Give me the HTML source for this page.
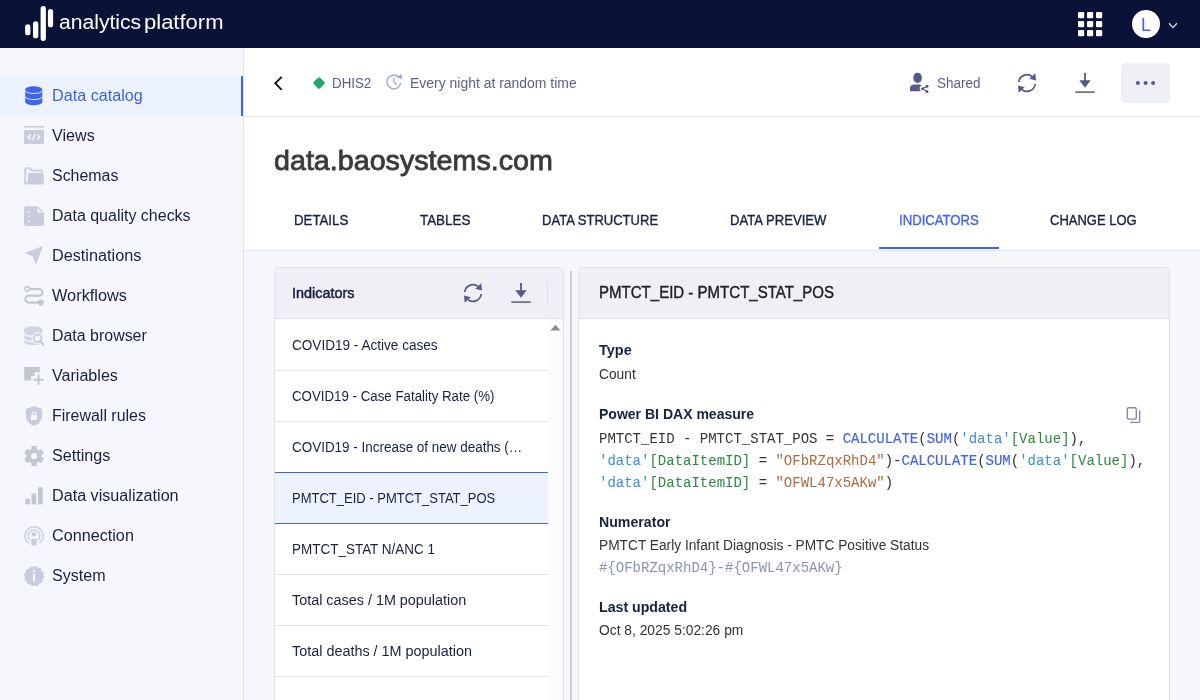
<!DOCTYPE html>
<html lang="en">
<head>
<meta charset="utf-8">
<title>analytics platform</title>
<style>
*{box-sizing:border-box;margin:0;padding:0}
html,body{width:1200px;height:700px;overflow:hidden}
body{font-family:"Liberation Sans",sans-serif;color:#1a2040;background:#fff;position:relative;font-size:14px}
#app{position:absolute;left:0;top:0;width:1200px;height:700px;will-change:transform}
.abs{position:absolute}
svg{position:absolute;overflow:visible}
#topbar{left:0;top:0;width:1200px;height:48px;background:#0a1237}
#logotxt{left:59px;top:0;line-height:44px;font-size:19.5px;color:#fff;white-space:nowrap}
#avatar{left:1132px;top:10px;width:28px;height:28px;border-radius:50%;background:#fff;color:#4263eb;text-align:center;line-height:31px;font-size:18px}
#sidebar{left:0;top:48px;width:244px;height:652px;background:#f6f7fc;border-right:1px solid #dfe2ee}
.nav{position:absolute;left:0;width:243px;height:40px}
.nav span{position:absolute;left:52px;top:0;line-height:40px;font-size:16px;color:#1a2040;white-space:nowrap}
.nav.active{background:#edf3fe;border-right:2px solid #4263eb}
.nav.active span{color:#3f5fe0}
#main{left:244px;top:48px;width:956px;height:652px;background:#fff}
#hdr{left:244px;top:48px;width:956px;height:69px;border-bottom:1px solid #e6e8f0;background:#fff}
.mut{position:absolute;font-size:14px;color:#5a5f8a;white-space:nowrap;line-height:20px}
#title{left:274px;top:141px;line-height:40px;font-size:28px;color:#3a3a3a;white-space:nowrap;-webkit-text-stroke:0.8px #3a3a3a}
#content{left:244px;top:250px;width:956px;height:450px;background:#f6f7fb;border-top:1px solid #e2e5ee}
.tab{position:absolute;top:190px;height:60px;line-height:60px;font-size:14px;color:#1a2040;white-space:nowrap;-webkit-text-stroke:0.35px #1a2040}
.tab.on{color:#4263eb;-webkit-text-stroke:0.35px #4263eb}
.panel{position:absolute;top:267px;height:440px;background:#fff;border:1px solid #dfe2ec;border-radius:4px 4px 0 0}
.phdr{position:absolute;left:0;top:0;right:0;height:51px;background:#eef0f6;border-bottom:1px solid #dfe2ec;border-radius:3px 3px 0 0}
.li{position:absolute;left:275px;width:273px;height:51px;border-bottom:1px solid #e0e3ec;background:#fff}
.li span{position:absolute;left:17px;top:0;line-height:51px;font-size:14px;color:#1a2040;white-space:nowrap}
.li.sel{background:#edf3fe;border-bottom:1px solid #4263eb}
.lbl{position:absolute;left:599px;font-size:14px;line-height:20px;color:#1a2040;white-space:nowrap;font-weight:bold}
.val{position:absolute;left:599px;font-size:14px;line-height:20px;color:#333;white-space:nowrap}
.mono{position:absolute;left:599px;font-family:"Liberation Mono",monospace;font-size:14px;line-height:22px;white-space:nowrap;color:#333}
.k{color:#4263eb;-webkit-text-stroke:0.18px #4263eb}.s{color:#3b8fd0}.g{color:#2a8a3c}.o{color:#b06a3c}
/*FIT*/
#lg1{transform:scaleX(1.0826);transform-origin:0 50%;margin-left:-0.44px}
#lg2{transform:scaleX(1.1287);transform-origin:0 50%;margin-left:3.83px}
#n1{transform:scaleX(1.0114);transform-origin:0 50%;margin-left:0.00px}
#n2{transform:scaleX(1.0093);transform-origin:0 50%;margin-left:0.00px}
#n3{transform:scaleX(0.9964);transform-origin:0 50%;margin-left:0.00px}
#n4{transform:scaleX(0.9991);transform-origin:0 50%;margin-left:0.00px}
#n5{transform:scaleX(1.0143);transform-origin:0 50%;margin-left:0.00px}
#n6{transform:scaleX(1.0209);transform-origin:0 50%;margin-left:0.00px}
#n7{transform:scaleX(0.9961);transform-origin:0 50%;margin-left:0.00px}
#n8{transform:scaleX(1.0055);transform-origin:0 50%;margin-left:0.00px}
#n9{transform:scaleX(0.9965);transform-origin:0 50%;margin-left:0.00px}
#n10{transform:scaleX(1.0097);transform-origin:0 50%;margin-left:0.00px}
#n11{transform:scaleX(1.0096);transform-origin:0 50%;margin-left:0.00px}
#n12{transform:scaleX(1.0115);transform-origin:0 50%;margin-left:0.00px}
#n13{transform:scaleX(1.0039);transform-origin:0 50%;margin-left:0.00px}
#m1{transform:scaleX(0.9524);transform-origin:0 50%;margin-left:0.00px}
#m2{transform:scaleX(0.9961);transform-origin:0 50%;margin-left:0.00px}
#m3{transform:scaleX(0.9609);transform-origin:0 50%;margin-left:0.00px}
#title{transform:scaleX(1.0239);transform-origin:0 50%;margin-left:0.25px}
#t1{transform:scaleX(0.9467);transform-origin:0 50%;margin-left:0.00px}
#t2{transform:scaleX(0.9568);transform-origin:0 50%;margin-left:0.00px}
#t3{transform:scaleX(0.9310);transform-origin:0 50%;margin-left:0.00px}
#t4{transform:scaleX(0.9364);transform-origin:0 50%;margin-left:0.00px}
#t5{transform:scaleX(0.9386);transform-origin:0 50%;margin-left:0.00px}
#t6{transform:scaleX(0.9279);transform-origin:0 50%;margin-left:0.00px}
#b1{transform:scaleX(1.0289);transform-origin:0 50%;margin-left:0.00px}
#l1{transform:scaleX(0.9695);transform-origin:0 50%;margin-left:0.00px}
#l2{transform:scaleX(0.9497);transform-origin:0 50%;margin-left:0.00px}
#l3{transform:scaleX(0.9608);transform-origin:0 50%;margin-left:0.00px}
#l4{transform:scaleX(0.9286);transform-origin:0 50%;margin-left:0.00px}
#l5{transform:scaleX(0.9627);transform-origin:0 50%;margin-left:0.00px}
#l6{transform:scaleX(1.0269);transform-origin:0 50%;margin-left:0.00px}
#l7{transform:scaleX(1.0280);transform-origin:0 50%;margin-left:0.00px}
#ptitle{transform:scaleX(0.9395);transform-origin:0 50%;margin-left:0.00px}
#b2{transform:scaleX(1.0338);transform-origin:0 50%;margin-left:0.00px}
#v1{transform:scaleX(0.9843);transform-origin:0 50%;margin-left:0.00px}
#b3{transform:scaleX(1.0015);transform-origin:0 50%;margin-left:0.00px}
#b4{transform:scaleX(1.0104);transform-origin:0 50%;margin-left:0.00px}
#v2{transform:scaleX(0.9803);transform-origin:0 50%;margin-left:0.00px}
#b5{transform:scaleX(1.0114);transform-origin:0 50%;margin-left:0.00px}
#v3{transform:scaleX(0.9863);transform-origin:0 50%;margin-left:0.00px}
/*ENDFIT*/
</style>
</head>
<body>
<div id="app">
<!-- TOPBAR -->
<div id="topbar" class="abs">
  <svg style="left:0;top:0" width="60" height="48" viewBox="0 0 60 48">
    <rect x="25.100" y="24.300" width="5.300" height="11" rx="2.650" fill="#fff"/>
    <rect x="33" y="21.300" width="5.300" height="17" rx="2.650" fill="#fff"/>
    <rect x="40.600" y="6" width="5.300" height="35" rx="2.650" fill="#fff"/>
    <rect x="47.900" y="9" width="5.200" height="18.300" rx="2.600" fill="#fff"/>
  </svg>
  <div id="logotxt" class="abs"><span id="lg1" style="display:inline-block">analytics</span> <span id="lg2" style="display:inline-block">platform</span></div>
  <svg style="left:1078px;top:12px" width="24" height="24" viewBox="0 0 24 24" fill="#fff">
    <rect x="0" y="0" width="6.2" height="6.2" rx="1"/><rect x="9" y="0" width="6.2" height="6.2" rx="1"/><rect x="18" y="0" width="6.2" height="6.2" rx="1"/>
    <rect x="0" y="9" width="6.2" height="6.2" rx="1"/><rect x="9" y="9" width="6.2" height="6.2" rx="1"/><rect x="18" y="9" width="6.2" height="6.2" rx="1"/>
    <rect x="0" y="18" width="6.2" height="6.2" rx="1"/><rect x="9" y="18" width="6.2" height="6.2" rx="1"/><rect x="18" y="18" width="6.2" height="6.2" rx="1"/>
  </svg>
  <div id="avatar" class="abs">L</div>
  <svg style="left:1168px;top:22px" width="10" height="8" viewBox="0 0 10 8"><path d="M1 1.3 L5 5.6 L9 1.3" fill="none" stroke="#d8dbe8" stroke-width="1.3"/></svg>
</div>

<!-- SIDEBAR -->
<div id="sidebar" class="abs"></div>
<!--NAVSTART-->
<div class="nav active" style="top:76px"><svg style="left:24px;top:9px" width="20" height="22" viewBox="0 0 20 22" fill="#4263eb">
  <path d="M1.200 4.400 A8.550 3.200 0 0 1 18.300 4.400 V17 A8.550 3.200 0 0 1 1.200 17 Z"/>
  <path d="M1.200 5.300 A8.550 3.200 0 0 0 18.300 5.300" fill="none" stroke="#edf3fe" stroke-width="0.900"/>
  <path d="M1.200 11.400 A8.550 3.200 0 0 0 18.300 11.400" fill="none" stroke="#edf3fe" stroke-width="0.900"/>
</svg><span id="n1">Data catalog</span></div>
<div class="nav" style="top:116px"><svg style="left:24px;top:9px" width="20" height="22" viewBox="0 0 20 22">
  <rect x="0" y="1" width="20" height="1.6" fill="#c9ccdd"/><rect x="0" y="5" width="20" height="14" rx="0.8" fill="#c9ccdd"/>
  <path d="M6.6 9.6 L4.2 12 L6.6 14.400 M13.400 9.600 L15.800 12 L13.400 14.400 M11 9 L9 15" fill="none" stroke="#f6f7fc" stroke-width="1.55"/>
</svg><span id="n2">Views</span></div>
<div class="nav" style="top:156px"><svg style="left:24px;top:9px" width="20" height="22" viewBox="0 0 20 22">
  <path d="M1.200 19 V4.200 Q1.200 3.200 2.200 3.200 H6 L7.800 5.400 H16.800 Q17.800 5.400 17.800 6.400 V8.500" fill="none" stroke="#cdd0e0" stroke-width="2" stroke-linejoin="round"/>
  <path d="M0.200 17 H5 V19.600 H1.700 Q0.200 19.600 0.200 18.100 Z" fill="#cdd0e0"/>
  <rect x="4" y="8" width="15.800" height="11.600" rx="1.300" fill="#c9ccdd"/>
</svg><span id="n3">Schemas</span></div>
<div class="nav" style="top:196px"><svg style="left:24px;top:9px" width="20" height="22" viewBox="0 0 20 22">
  <path d="M2 1.300 H13.500 L20 7.800 V19 Q20 21 18 21 H2 Q0 21 0 19 V3.300 Q0 1.300 2 1.300 Z" fill="#c9ccdd"/>
  <path d="M13.200 2.300 V6.600 Q13.200 8 14.600 8 H18.800 Z" fill="#eceef6"/>
  <rect x="4.200" y="6" width="1.600" height="1.600" fill="#f6f7fc"/><rect x="4.200" y="10.400" width="1.600" height="1.600" fill="#f6f7fc"/><rect x="4.200" y="14.800" width="1.600" height="1.600" fill="#f6f7fc"/>
</svg><span id="n4">Data quality checks</span></div>
<div class="nav" style="top:236px"><svg style="left:24px;top:9px" width="20" height="22" viewBox="0 0 20 22">
  <path d="M18.900 1.100 L0.200 8 L8.700 11.300 L12 19.600 Z" fill="#c9ccdd"/>
</svg><span id="n5">Destinations</span></div>
<div class="nav" style="top:276px"><svg style="left:24px;top:9px" width="20" height="22" viewBox="0 0 20 22">
  <path d="M5.400 4.100 H15.300 A3.250 3.250 0 0 1 15.300 10.600 H4.800 A3.500 3.500 0 0 0 4.800 17.600 H14" fill="none" stroke="#c3c7cf" stroke-width="2.100"/>
  <circle cx="3.200" cy="4.100" r="2.300" fill="#f6f7fc" stroke="#c3c7cf" stroke-width="1.500"/>
  <circle cx="16.800" cy="17.600" r="3.100" fill="#c3c7cf"/>
</svg><span id="n6">Workflows</span></div>
<div class="nav" style="top:316px"><svg style="left:24px;top:9px" width="21" height="22" viewBox="0 0 21 22">
  <g fill="#d0d3e2">
  <path d="M0.200 4.800 C0.200 2.600 4.200 1.200 9.300 1.200 S18.400 2.600 18.400 4.800 V7.200 C18.400 9.400 14.400 10.600 9.300 10.600 S0.200 9.400 0.200 7.200 Z"/>
  <path d="M0.200 9.800 C2 11.500 5.500 12.100 9.300 12.100 S16.600 11.500 18.400 9.800 V12.400 C18.400 14.600 14.400 15.800 9.300 15.800 S0.200 14.600 0.200 12.400 Z"/>
  <path d="M0.200 14.900 C2 16.600 5.500 17.200 9.300 17.200 S16.600 16.600 18.400 14.900 V16.800 C18.400 19 14.400 20.200 9.300 20.200 S0.200 19 0.200 16.800 Z"/>
  </g>
  <circle cx="13.600" cy="13.300" r="6" fill="#f6f7fc"/>
  <path d="M16.500 16.300 L20 20.300" stroke="#f6f7fc" stroke-width="5" fill="none"/>
  <circle cx="13.600" cy="13.300" r="3.800" fill="none" stroke="#c9ccdd" stroke-width="1.900"/>
  <path d="M16.400 16.300 L19.300 19.700" stroke="#c9ccdd" stroke-width="2.400" stroke-linecap="round" fill="none"/>
</svg><span id="n7">Data browser</span></div>
<div class="nav" style="top:356px"><svg style="left:24px;top:9px" width="20" height="22" viewBox="0 0 20 22">
  <path d="M0.200 2 H15.800 V7.200 H10.500 V11.200 H7 V15.500 H0.200 Z" fill="#c3c7cf"/>
  <path d="M14.600 9.600 V19.800 M9.500 14.700 H19.700" stroke="#c3c7cf" stroke-width="1.900" fill="none"/>
</svg><span id="n8">Variables</span></div>
<div class="nav" style="top:396px"><svg style="left:24px;top:9px" width="20" height="22" viewBox="0 0 20 22">
  <path d="M10 1 L18.200 3.900 V10.500 C18.200 15.500 14.500 19.500 10 21 C5.500 19.500 1.800 15.500 1.800 10.500 V3.900 Z" fill="#c9ccdd"/>
  <rect x="7" y="10" width="6" height="5" rx="0.600" fill="#f6f7fc"/>
  <path d="M8.200 10 V8.600 A1.800 1.800 0 0 1 11.800 8.600 V10" fill="none" stroke="#f6f7fc" stroke-width="1.100"/>
</svg><span id="n9">Firewall rules</span></div>
<div class="nav" style="top:436px"><svg style="left:24px;top:9px" width="20" height="22" viewBox="0 0 20 22">
  <g transform="translate(10.100,11)" fill="#c3c7cf">
    <circle r="7.600"/>
    <rect x="-2.700" y="-9.900" width="5.400" height="19.800" rx="1"/>
    <rect x="-2.700" y="-9.900" width="5.400" height="19.800" rx="1" transform="rotate(60)"/>
    <rect x="-2.700" y="-9.900" width="5.400" height="19.800" rx="1" transform="rotate(120)"/>
    <circle r="3.100" fill="#f6f7fc"/>
  </g>
</svg><span id="n10">Settings</span></div>
<div class="nav" style="top:476px"><svg style="left:24px;top:9px" width="20" height="22" viewBox="0 0 20 22" fill="#c3c7cf">
  <rect x="1.200" y="13.500" width="4.800" height="6.100" rx="1.100"/><rect x="7.500" y="8.500" width="4.800" height="11.100" rx="1.100"/><rect x="14" y="2.300" width="4.700" height="17.300" rx="1.100"/>
</svg><span id="n11">Data visualization</span></div>
<div class="nav" style="top:516px"><svg style="left:24px;top:9px" width="20" height="22" viewBox="0 0 20 22">
  <path d="M4.84 18.17 A9 9 0 1 1 15.16 18.17" fill="none" stroke="#cfd2e2" stroke-width="1.600"/>
  <path d="M6.98 15.63 A5.7 5.7 0 1 1 13.02 15.63" fill="none" stroke="#cfd2e2" stroke-width="1.700"/>
  <circle cx="10" cy="9.400" r="2.200" fill="#c9ccdd"/>
  <rect x="7.400" y="13.800" width="5.300" height="6.800" rx="0.600" fill="#c9ccdd"/>
</svg><span id="n12">Connection</span></div>
<div class="nav" style="top:556px"><svg style="left:24px;top:9px" width="20" height="22" viewBox="0 0 20 22">
  <g transform="translate(10.100,11.100)" fill="#c9ccdd">
    <circle r="9.300"/>
    <circle r="9.500" fill="none" stroke="#c9ccdd" stroke-width="1.200" stroke-dasharray="2.736 2.238"/>
    <rect x="-1.100" y="-2.400" width="2.200" height="8" fill="#f6f7fc"/>
    <circle cy="-4.800" r="1.250" fill="#f6f7fc"/>
  </g>
</svg><span id="n13">System</span></div>
<!--NAVEND-->

<!-- MAIN -->
<div id="main" class="abs"></div>
<div id="hdr" class="abs"></div>
<svg style="left:272px;top:74.500px" width="12" height="16" viewBox="0 0 12 16"><path d="M9.700 1.800 L3.300 8.300 L9.700 14.800" fill="none" stroke="#111" stroke-width="1.900"/></svg>
<svg style="left:312px;top:76px" width="14" height="14" viewBox="0 0 14 14"><rect x="2.500" y="2.500" width="9" height="9" rx="1.500" fill="#1fa572" transform="translate(0,0) rotate(45 7 7)"/></svg>
<div class="mut" id="m1" style="left:332px;top:73px">DHIS2</div>
<svg style="left:385px;top:73px" width="18" height="18" viewBox="0 0 18 18">
  <path d="M15.63 9.96 A6.9 6.9 0 1 1 13.42 3.87" fill="none" stroke="#a6abc9" stroke-width="1.45"/>
  <path d="M17.1 1.100 L16.700 6.600 L11.500 4 Z" fill="#a6abc9"/>
  <path d="M8.800 4.500 V9.500 L12 11.700" fill="none" stroke="#a6abc9" stroke-width="1.300"/>
</svg>
<div class="mut" id="m2" style="left:410px;top:73px">Every night at random time</div>
<svg style="left:909px;top:72px" width="21" height="22" viewBox="0 0 21 22" fill="#555a86">
  <ellipse cx="8.600" cy="5.900" rx="4.300" ry="5.100"/>
  <path d="M1 19.300 V16 Q1 12.600 5.500 12.500 H10 Q12.300 12.600 12.900 13.200 L10.800 14.800 Q10.200 17.200 11.600 19.300 Z"/>
  <circle cx="13.600" cy="16.700" r="1.500"/><circle cx="18" cy="14.200" r="1.500"/><circle cx="18" cy="19.600" r="1.500"/>
  <path d="M18 14.200 L13.600 16.700 L18 19.600" fill="none" stroke="#555a86" stroke-width="1.100"/>
</svg>
<div class="mut" id="m3" style="left:937px;top:73px">Shared</div>
<svg style="left:1017px;top:72px" width="20" height="22" viewBox="0 0 20 22" id="sync1">
  <path d="M1.750 10 A8.300 8.300 0 0 1 14.900 4.300" fill="none" stroke="#555a86" stroke-width="1.700"/>
  <path d="M18.250 12 A8.300 8.300 0 0 1 5.100 17.700" fill="none" stroke="#555a86" stroke-width="1.700"/>
  <path d="M18.300 1.300 L19 8.600 L12.300 6.700 Z" fill="#555a86"/>
  <path d="M1.700 20.700 L1 13.400 L7.700 15.300 Z" fill="#555a86"/>
</svg>
<svg style="left:1075px;top:72px" width="20" height="22" viewBox="0 0 20 22">
  <path d="M10 1 V9.500" stroke="#555a86" stroke-width="1.800" fill="none"/>
  <path d="M4.300 8.300 H15.700 L10 15.700 Z" fill="#555a86"/>
  <path d="M0.300 20.100 H19.700" stroke="#555a86" stroke-width="1.500" fill="none"/>
</svg>
<div class="abs" style="left:1121px;top:63px;width:49px;height:40px;border-radius:4px;background:#eef0f6"></div>
<svg style="left:1135px;top:80px" width="22" height="6" viewBox="0 0 22 6" fill="#555a86"><circle cx="2.900" cy="3.100" r="2"/><circle cx="10.600" cy="3.100" r="2"/><circle cx="18.100" cy="3.100" r="2"/></svg>

<div id="title" class="abs">data.baosystems.com</div>
<div class="tab" id="t1" style="left:294px">DETAILS</div>
<div class="tab" id="t2" style="left:420px">TABLES</div>
<div class="tab" id="t3" style="left:542px">DATA STRUCTURE</div>
<div class="tab" id="t4" style="left:730px">DATA PREVIEW</div>
<div class="tab on" id="t5" style="left:899px">INDICATORS</div>
<div class="tab" id="t6" style="left:1050px">CHANGE LOG</div>
<div class="abs" style="left:879px;top:247px;width:120px;height:2px;background:#4263eb"></div>

<div id="content" class="abs"></div>
<div class="panel" style="left:274px;width:290px"><div class="phdr"></div></div>
<div class="lbl" id="b1" style="left:292px;top:283px;color:#1a2040;font-weight:normal;-webkit-text-stroke:0.5px #1a2040">Indicators</div>
<svg style="left:463px;top:282px" width="20" height="22" viewBox="0 0 20 22">
  <path d="M1.750 10 A8.300 8.300 0 0 1 14.900 4.300" fill="none" stroke="#555a86" stroke-width="1.700"/>
  <path d="M18.250 12 A8.300 8.300 0 0 1 5.100 17.700" fill="none" stroke="#555a86" stroke-width="1.700"/>
  <path d="M18.300 1.300 L19 8.600 L12.300 6.700 Z" fill="#555a86"/>
  <path d="M1.700 20.700 L1 13.400 L7.700 15.300 Z" fill="#555a86"/>
</svg>
<svg style="left:511px;top:282px" width="20" height="22" viewBox="0 0 20 22">
  <path d="M10 1 V9.500" stroke="#555a86" stroke-width="1.800" fill="none"/>
  <path d="M4.300 8.300 H15.700 L10 15.700 Z" fill="#555a86"/>
  <path d="M0.300 20.100 H19.700" stroke="#555a86" stroke-width="1.500" fill="none"/>
</svg>
<div class="abs" style="left:547px;top:282px;width:1px;height:22px;background:#dcdfe9"></div>
<div class="li" style="top:320px"><span id="l1">COVID19 - Active cases</span></div>
<div class="li" style="top:371px"><span id="l2">COVID19 - Case Fatality Rate (%)</span></div>
<div class="li" style="top:422px;border-bottom-color:#4263eb"><span id="l3">COVID19 - Increase of new deaths (…</span></div>
<div class="li sel" style="top:473px"><span id="l4">PMTCT_EID - PMTCT_STAT_POS</span></div>
<div class="li" style="top:524px"><span id="l5">PMTCT_STAT N/ANC 1</span></div>
<div class="li" style="top:575px"><span id="l6">Total cases / 1M population</span></div>
<div class="li" style="top:626px"><span id="l7">Total deaths / 1M population</span></div>
<div class="li" style="top:677px;border-bottom:none"></div>
<div class="abs" style="left:548px;top:319px;width:15px;height:381px;background:#fcfcfd"></div>
<svg style="left:550px;top:323.500px" width="11" height="7" viewBox="0 0 11 7"><path d="M0.500 6.500 L5.500 0.800 L10.500 6.500 Z" fill="#8a8a8a"/></svg>
<div class="abs" style="left:570px;top:271px;width:2px;height:430px;background:#c9ccde"></div>
<div class="panel" style="left:578px;width:592px"><div class="phdr"></div></div>
<div class="abs" id="ptitle" style="left:599px;top:281px;line-height:24px;font-size:16px;color:#222;white-space:nowrap;-webkit-text-stroke:0.4px #222">PMTCT_EID - PMTCT_STAT_POS</div>
<div class="lbl" id="b2" style="top:340px">Type</div>
<div class="val" id="v1" style="top:364px">Count</div>
<div class="lbl" id="b3" style="top:404px">Power BI DAX measure</div>
<svg style="left:1126px;top:407px" width="15" height="17" viewBox="0 0 15 17">
  <rect x="1.300" y="0.700" width="9" height="11.400" rx="1.500" fill="none" stroke="#7f86aa" stroke-width="1.350"/>
  <path d="M4.200 15.300 H12.500 Q13.700 15.300 13.700 14.100 V3.500" fill="none" stroke="#7f86aa" stroke-width="1.350"/>
</svg>
<div class="mono" id="c1" style="top:428px">PMTCT_EID - PMTCT_STAT_POS = <span class="k">CALCULATE</span>(<span class="k">SUM</span>(<span class="s">'data'</span><span class="g">[Value]</span>),</div>
<div class="mono" id="c2" style="top:450px"><span class="s">'data'</span><span class="g">[DataItemID]</span> = <span class="o">"OFbRZqxRhD4"</span>)-<span class="k">CALCULATE</span>(<span class="k">SUM</span>(<span class="s">'data'</span><span class="g">[Value]</span>),</div>
<div class="mono" id="c3" style="top:472px"><span class="s">'data'</span><span class="g">[DataItemID]</span> = <span class="o">"OFWL47x5AKw"</span>)</div>
<div class="lbl" id="b4" style="top:512px">Numerator</div>
<div class="val" id="v2" style="top:535px">PMTCT Early Infant Diagnosis - PMTC Positive Status</div>
<div class="mono" id="c4" style="top:557px;color:#8a92b8">#{OFbRZqxRhD4}-#{OFWL47x5AKw}</div>
<div class="lbl" id="b5" style="top:597px">Last updated</div>
<div class="val" id="v3" style="top:620px">Oct 8, 2025 5:02:26 pm</div>

</div>
</body>
</html>
